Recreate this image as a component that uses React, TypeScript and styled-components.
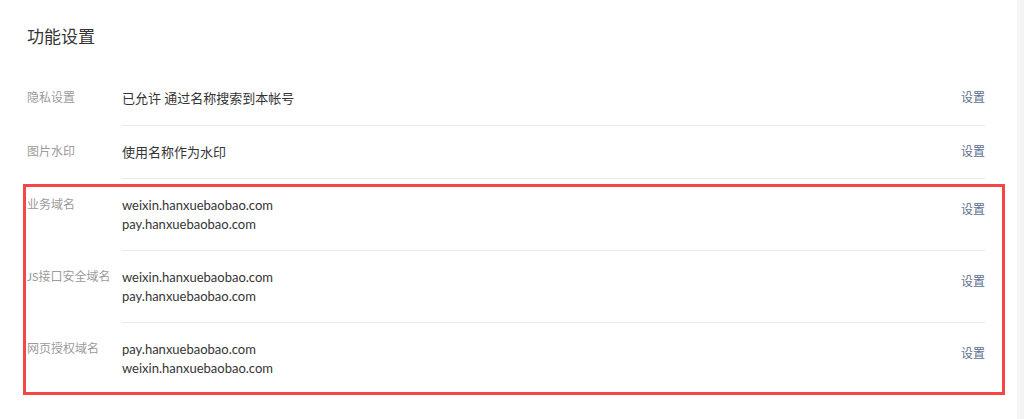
import React from "react";
import styled, { createGlobalStyle } from "styled-components";

const Global = createGlobalStyle`
  html, body {
    margin: 0;
    padding: 0;
    background: #f4f5f7;
  }
  body {
    font-family: Lato, "Noto Sans CJK SC", sans-serif;
  }
`;

const Page = styled.div`
  width: 1017px;
  height: 419px;
  box-sizing: border-box;
  background: #ffffff;
  padding: 27px 32px 0 27px;
  display: flex;
  flex-direction: column;
`;

const Title = styled.h2`
  margin: 0 0 25px;
  font-size: 17px;
  line-height: 20px;
  font-weight: 400;
  color: #353535;
`;

const List = styled.div`
  display: flex;
  flex-direction: column;
`;

const Group = styled.div`
  position: relative;
  display: flex;
  flex-direction: column;
`;

const Annotation = styled.div`
  position: absolute;
  top: 5px;
  left: -4px;
  right: -20px;
  bottom: -1px;
  border: 3px solid #f64545;
  pointer-events: none;
`;

const Row = styled.div`
  display: flex;
  align-items: stretch;
`;

const Label = styled.div`
  width: 95px;
  flex-shrink: 0;
  padding-top: 17px;
  font-size: 12px;
  line-height: 18.5px;
  color: #9b9b9b;
  white-space: nowrap;
`;

const Body = styled.div<{ $last?: boolean }>`
  flex: 1;
  display: flex;
  align-items: flex-start;
  padding: 17px 0;
  border-bottom: ${(p) => (p.$last ? "none" : "1px solid #e9eaee")};
`;

const Values = styled.div`
  flex: 1;
  display: flex;
  flex-direction: column;
  font-size: 13px;
  line-height: 18.5px;
  color: #353535;
`;

const Action = styled.a<{ $multi?: boolean }>`
  font-size: 12px;
  line-height: 18.5px;
  color: #5e6e8f;
  text-decoration: none;
  cursor: pointer;
  padding-top: ${(p) => (p.$multi ? "5px" : "0")};
`;

type Item = { label: string; values: string[] };

const top: Item[] = [
  { label: "隐私设置", values: ["已允许 通过名称搜索到本帐号"] },
  { label: "图片水印", values: ["使用名称作为水印"] },
];

const domains: Item[] = [
  { label: "业务域名", values: ["weixin.hanxuebaobao.com", "pay.hanxuebaobao.com"] },
  { label: "JS接口安全域名", values: ["weixin.hanxuebaobao.com", "pay.hanxuebaobao.com"] },
  { label: "网页授权域名", values: ["pay.hanxuebaobao.com", "weixin.hanxuebaobao.com"] },
];

const SettingRow = ({ item, last }: { item: Item; last?: boolean }) => (
  <Row>
    <Label>{item.label}</Label>
    <Body $last={last}>
      <Values>
        {item.values.map((v) => (
          <span key={v}>{v}</span>
        ))}
      </Values>
      <Action $multi={item.values.length > 1}>设置</Action>
    </Body>
  </Row>
);

export default function App() {
  return (
    <>
      <Global />
      <Page>
        <Title>功能设置</Title>
        <List>
          {top.map((it) => (
            <SettingRow key={it.label} item={it} />
          ))}
          <Group>
            {domains.map((it, i) => (
              <SettingRow key={it.label} item={it} last={i === domains.length - 1} />
            ))}
            <Annotation />
          </Group>
        </List>
      </Page>
    </>
  );
}
